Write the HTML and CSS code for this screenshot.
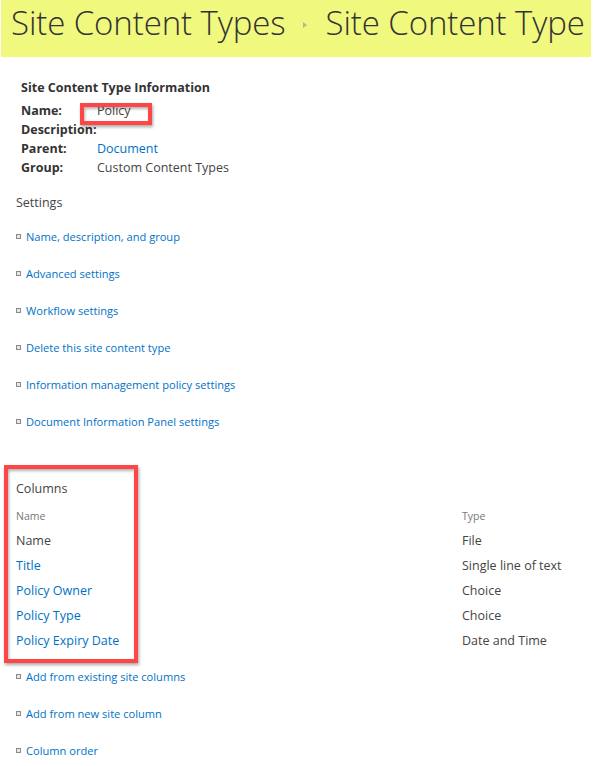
FILE: index.html
```html
<!DOCTYPE html>
<html>
<head>
<meta charset="utf-8">
<link rel="stylesheet" href="styles.css">
</head>
<body>
<div class="page">
  <div class="banner">
    <span class="crumb">Site Content Types</span>
    <span class="sep"></span>
    <span class="crumb">Site Content Type</span>
  </div>

  <section class="info">
    <div class="info-title">Site Content Type Information</div>
    <div class="info-grid">
      <div class="lbl">Name:</div><div class="val">Policy</div>
      <div class="lbl">Description:</div><div class="val"></div>
      <div class="lbl">Parent:</div><div class="val"><a class="link">Document</a></div>
      <div class="lbl">Group:</div><div class="val">Custom Content Types</div>
    </div>
    <div class="mark mark-name"></div>
  </section>

  <div class="heading settings-head">Settings</div>
  <ul class="links">
    <li><a class="link">Name, description, and group</a></li>
    <li><a class="link">Advanced settings</a></li>
    <li><a class="link">Workflow settings</a></li>
    <li><a class="link">Delete this site content type</a></li>
    <li><a class="link">Information management policy settings</a></li>
    <li><a class="link">Document Information Panel settings</a></li>
  </ul>

  <section class="columns">
    <div class="heading">Columns</div>
    <div class="col-grid">
      <div class="th">Name</div><div class="th">Type</div>
      <div class="td">Name</div><div class="td">File</div>
      <div class="td"><a class="link">Title</a></div><div class="td">Single line of text</div>
      <div class="td"><a class="link">Policy Owner</a></div><div class="td">Choice</div>
      <div class="td"><a class="link">Policy Type</a></div><div class="td">Choice</div>
      <div class="td"><a class="link">Policy Expiry Date</a></div><div class="td">Date and Time</div>
    </div>
    <div class="mark mark-cols"></div>
  </section>

  <ul class="links links-cols">
    <li><a class="link">Add from existing site columns</a></li>
    <li><a class="link">Add from new site column</a></li>
    <li><a class="link">Column order</a></li>
  </ul>
</div>
</body>
</html>
```

FILE: styles.css
```css
html, body {
  margin: 0;
  padding: 0;
  background: #ffffff;
}
body {
  font-family: "Open Sans", "Noto Sans", "Liberation Sans", sans-serif;
  font-size: 12.5px;
  color: #444444;
  overflow: hidden;
}
.page {
  width: 593px;
  position: relative;
}
.banner {
  margin: 0 2px 0 1px;
  height: 57px;
  background: #f0f87e;
  display: flex;
  align-items: flex-start;
  white-space: nowrap;
  padding-left: 10px;
  box-sizing: border-box;
}
.crumb {
  flex: none;
  font-family: "Open Sans", "Noto Sans", sans-serif;
  font-weight: 300;
  font-size: 33px;
  line-height: 45px;
  color: #333333;
  letter-spacing: -0.1px;
}
.sep {
  flex: none;
  width: 0;
  height: 0;
  border-left: 4px solid #b4b49a;
  border-top: 3px solid transparent;
  border-bottom: 3px solid transparent;
  margin: 22px 19px 0 17px;
}
.info {
  position: relative;
  padding: 21px 0 0 21px;
}
.info-title {
  font-weight: 700;
  color: #333333;
  line-height: 19px;
}
.info-grid {
  display: grid;
  grid-template-columns: 76px auto;
  grid-auto-rows: 19px;
  line-height: 19px;
  margin-top: 4px;
}
.lbl {
  font-weight: 700;
  color: #333333;
  white-space: nowrap;
}
.val {
  color: #444444;
}
.link {
  color: #0072c6;
  text-decoration: none;
}
.mark {
  position: absolute;
  border: 4px solid #ff4646;
  box-sizing: border-box;
  box-shadow: 1px 2px 3px rgba(0,0,0,0.35), inset 1px 2px 3px rgba(0,0,0,0.3);
}
.mark-name {
  left: 80px;
  top: 46px;
  width: 72px;
  height: 22px;
}
.heading {
  font-size: 12.5px;
  color: #444444;
  line-height: 19px;
}
.settings-head {
  padding-left: 16px;
  margin-top: 16px;
}
.links {
  list-style: none;
  margin: 15px 0 0 0;
  padding: 0 0 0 16px;
}
.links li {
  display: flex;
  align-items: center;
  height: 19px;
  margin-bottom: 18px;
  font-size: 11.1px;
}
.links li::before {
  content: "";
  width: 3px;
  height: 3px;
  border: 1px solid #8a8a8a;
  background: #e8e8e8;
  margin-right: 5px;
  flex: none;
}
.columns {
  position: relative;
  margin-top: 48px;
  padding-left: 16px;
}
.col-grid {
  display: grid;
  grid-template-columns: 446px auto;
  margin-top: 9px;
}
.th {
  font-size: 10.5px;
  color: #777777;
  line-height: 19px;
  padding-bottom: 5px;
}
.td {
  line-height: 19px;
  height: 25px;
  color: #444444;
  white-space: nowrap;
}
.mark-cols {
  left: 4px;
  top: -14px;
  width: 134px;
  height: 198px;
}
.links-cols {
  margin-top: 11px;
}
```
